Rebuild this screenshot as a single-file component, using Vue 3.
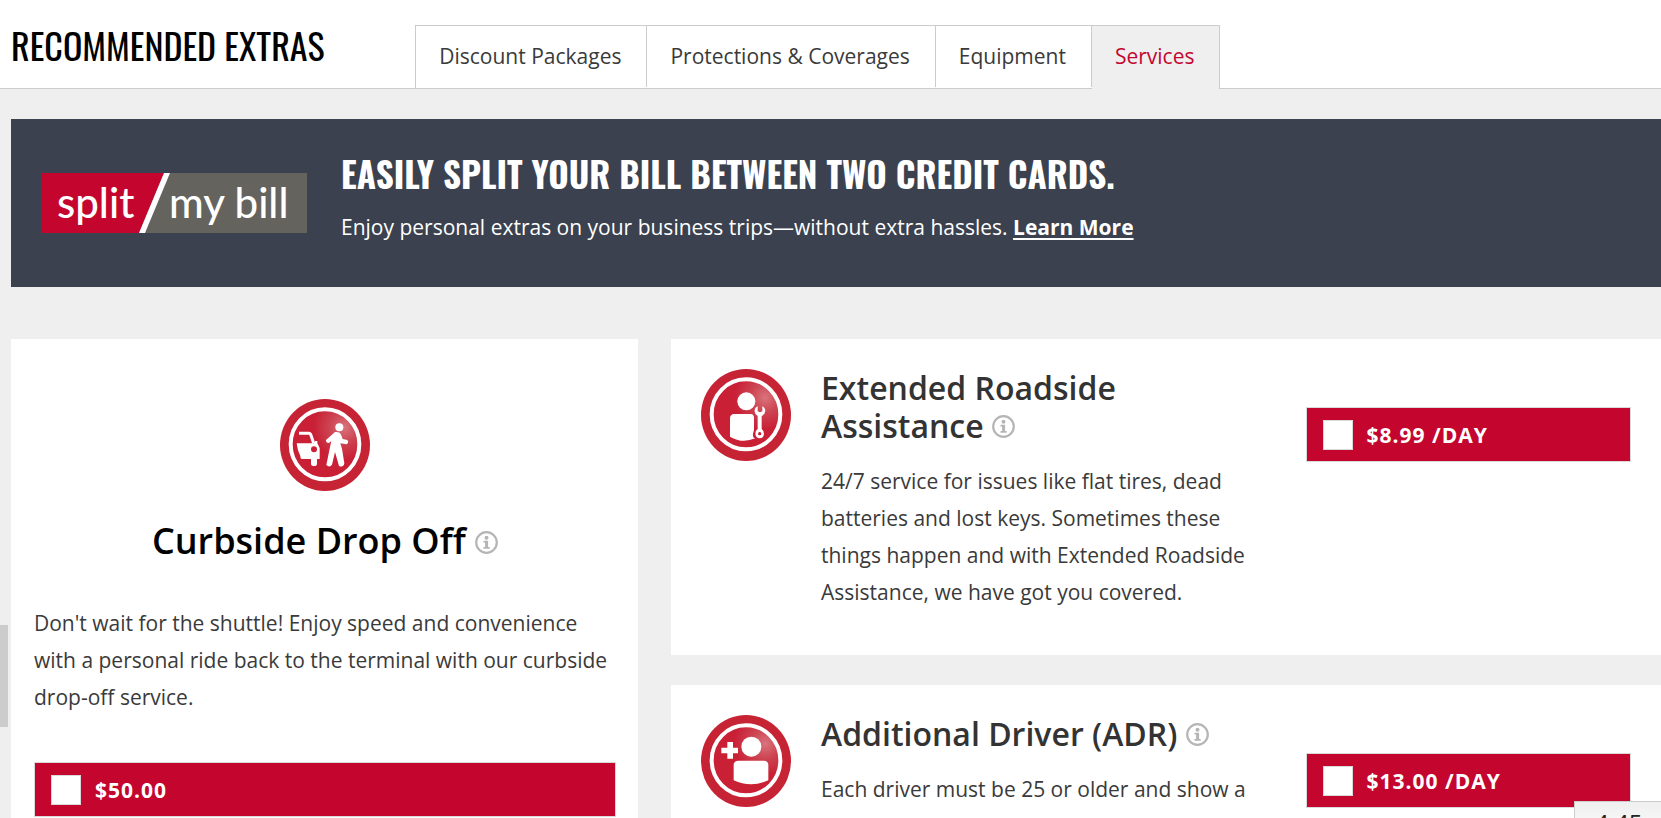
<script setup>
import { ref } from 'vue'

const tabs = ['Discount Packages', 'Protections & Coverages', 'Equipment', 'Services']
const active = ref('Services')
const curbside = ref(false)
const extras = ref([
  {
    id: 'roadside',
    title: 'Extended Roadside Assistance',
    text: '24/7 service for issues like flat tires, dead batteries and lost keys. Sometimes these things happen and with Extended Roadside Assistance, we have got you covered.',
    price: '$8.99 /DAY',
    checked: false,
  },
  {
    id: 'driver',
    title: 'Additional Driver (ADR)',
    text: "Each driver must be 25 or older and show a valid driver's license.",
    price: '$13.00 /DAY',
    checked: false,
  },
])
</script>

<template>
  <div class="page">
    <svg class="defs" aria-hidden="true">
      <defs>
        <radialGradient id="shine" cx="0.78" cy="0.26" r="0.45">
          <stop offset="0" stop-color="#d9747d" />
          <stop offset="0.45" stop-color="#cd4653" />
          <stop offset="1" stop-color="#c92036" />
        </radialGradient>
        <symbol id="badge" viewBox="0 0 270 276">
          <ellipse cx="135" cy="138" rx="135" ry="138" fill="#c62334" />
          <ellipse cx="135" cy="136" rx="103" ry="105" fill="url(#shine)" stroke="#fff" stroke-width="12" />
        </symbol>
        <symbol id="info" viewBox="0 0 23 23">
          <circle cx="11.500" cy="11.500" r="10.300" fill="none" stroke="#b5b5b5" stroke-width="2.200" />
          <circle cx="11.500" cy="6.800" r="2" fill="#b5b5b5" />
          <path d="M8.500 9.800h4.600v6.200h1.600v1.800h-6.200v-1.800h1.600v-4.400h-1.600z" fill="#b5b5b5" />
        </symbol>
      </defs>
    </svg>

    <header class="header">
      <h1 class="heading">RECOMMENDED EXTRAS</h1>
      <nav class="tabs">
        <button
          v-for="tab in tabs"
          :key="tab"
          type="button"
          class="tab"
          :class="{ active: tab === active }"
          @click="active = tab"
        >{{ tab }}</button>
      </nav>
    </header>

    <main class="main">
      <section class="banner">
        <svg class="logo" viewBox="0 0 266 60" role="img" aria-label="split my bill">
          <rect width="266" height="60" fill="#65635d" />
          <path d="M0 0H123L98 60H0z" fill="#c4062f" />
          <path d="M123 0h6L104 60h-6z" fill="#fff" />
          <text x="16" y="45" class="logo-text">split</text>
          <text x="128" y="45" class="logo-text">my bill</text>
        </svg>
        <div>
          <h2 class="banner-title">EASILY SPLIT YOUR BILL BETWEEN TWO CREDIT CARDS.</h2>
          <p class="banner-text">
            Enjoy personal extras on your business trips—without extra hassles.
            <a href="#">Learn More</a>
          </p>
        </div>
      </section>

      <div class="columns">
        <article class="card feature">
          <svg class="badge" viewBox="0 0 270 276" aria-hidden="true">
            <use href="#badge" />
            <g fill="#fff">
              <path d="M57 103H86Q91 103 93 109L101 133" fill="none" stroke="#fff" stroke-width="9" />
              <path d="M50 133H101L106 126H112V133L119 147V180H111V194Q111 201 102 201T93 194V180H64Q61 178 61 171L54 154Z" />
              <circle cx="102" cy="151" r="9" fill="#c92036" />
              <circle cx="178" cy="85" r="12" />
              <path d="M165 99Q180 97 184 109L188 120 202 123Q208 130 200 136L181 133 186 149 193 193Q190 207 177 201L165 159 156 197Q149 207 139 198L148 154 154 126 147 132Q137 132 138 123Z" />
            </g>
          </svg>
          <h2 class="feature-title">
            Curbside Drop Off
            <button type="button" class="info" aria-label="About Curbside Drop Off"><svg><use href="#info" /></svg></button>
          </h2>
          <p class="text">Don't wait for the shuttle! Enjoy speed and convenience with a personal ride back to the terminal with our curbside drop-off service.</p>
          <label class="price"><input v-model="curbside" type="checkbox" /><span>$50.00</span></label>
        </article>

        <div class="list">
          <article v-for="extra in extras" :key="extra.id" class="card extra">
            <svg class="badge" viewBox="0 0 270 276" aria-hidden="true">
              <use href="#badge" />
              <g v-if="extra.id === 'roadside'" fill="#fff">
                <circle cx="136" cy="97" r="27" />
                <path d="M99 135H150Q158 136 159 145V183Q151 207 163 208Q124 225 87 203V147Q88 136 99 135Z" />
                <path d="M170 112Q160 116 161 128Q162 137 170 141V180Q163 184 163 194Q164 207 176 208Q189 207 189 194Q188 184 182 180V141Q192 136 193 126Q192 115 184 112V127L177 130L170 127Z" />
                <circle cx="176" cy="194" r="5" fill="#c92036" />
              </g>
              <g v-else fill="#fff">
                <circle cx="151" cy="95" r="30" />
                <path d="M79 81H96V98H111V115H96V131H79V115H61V98H79Z" />
                <path d="M112 137H189Q202 138 202 150V196Q150 220 98 196V150Q98 138 112 137Z" />
              </g>
            </svg>
            <div class="details">
              <h3 class="extra-title">
                {{ extra.title }}
                <button type="button" class="info" :aria-label="'About ' + extra.title"><svg><use href="#info" /></svg></button>
              </h3>
              <p class="text">{{ extra.text }}</p>
            </div>
            <label class="price"><input v-model="extra.checked" type="checkbox" /><span>{{ extra.price }}</span></label>
          </article>
        </div>
      </div>
    </main>

    <div class="side-handle"></div>
    <div class="clock">4:45</div>
  </div>
</template>

<style>
body {
  margin: 0;
  background: #efefef;
}
</style>

<style scoped>
* {
  box-sizing: border-box;
}
.page {
  position: relative;
  height: 100vh;
  overflow: hidden;
  background: #efefef;
  color: #3a3a3a;
  font-family: "Open Sans", "Noto Sans", sans-serif;
  font-size: 21px;
}
h1, h2, h3, p {
  margin: 0;
}
.defs {
  position: absolute;
  width: 0;
  height: 0;
}
.header {
  display: flex;
  align-items: flex-start;
  background: #fff;
  border-bottom: 1px solid #ccc;
}
.heading {
  flex: 0 0 25%;
  padding: 21px 0 0 11px;
  color: #000;
  font-family: Oswald, "Roboto Condensed", "Liberation Sans Narrow", sans-serif;
  font-size: 36px;
  font-weight: 400;
  line-height: 48px;
  white-space: nowrap;
}
.tabs {
  display: flex;
  margin: 25px 0 -1px;
  border: 1px solid #ccc;
  border-bottom: 0;
}
.tab {
  height: 61px;
  padding: 0 25px 2px 23px;
  border: 0;
  border-right: 1px solid #ccc;
  background: #fff;
  color: #3a3a3a;
  font-family: inherit;
  font-size: 21px;
}
.tab:last-child {
  border-right: 0;
}
.tab.active {
  height: 63px;
  padding-bottom: 4px;
  background: #efefef;
  color: #c4062f;
}
.main {
  padding: 30px 0 0 11px;
}
.banner {
  display: flex;
  gap: 34px;
  height: 168px;
  padding: 30px;
  background: #3b414e;
  color: #fff;
}
.logo {
  flex: none;
  width: 266px;
  height: 60px;
  margin-top: 24px;
}
.logo-text {
  fill: #fff;
  font-family: Lato, sans-serif;
  font-size: 42px;
  font-weight: 500;
}
.banner-title {
  font-family: Oswald, "Roboto Condensed", "Liberation Sans Narrow", sans-serif;
  font-size: 35px;
  font-weight: 700;
  line-height: 48px;
}
.banner-text {
  margin-top: 12px;
  font-size: 21px;
  line-height: 37px;
}
.banner-text a {
  color: #fff;
  font-weight: 700;
  text-underline-offset: 3px;
}
.columns {
  display: grid;
  grid-template-columns: 38% 1fr;
  gap: 33px;
  margin-top: 52px;
}
.card {
  background: #fff;
}
.badge {
  flex: none;
  width: 90px;
  height: 92px;
}
.feature {
  display: flex;
  flex-direction: column;
  align-items: center;
  padding: 60px 22px 30px 23px;
}
.feature-title {
  margin-top: 24px;
  color: #000;
  font-size: 36px;
  font-weight: 600;
  line-height: 52px;
}
.feature .text {
  margin: 38px 0 46px;
}
.feature .price {
  flex: none;
  width: 100%;
  margin: 0;
}
.info {
  width: 23px;
  height: 23px;
  padding: 0;
  border: 0;
  background: none;
}
.info svg {
  display: block;
  width: 23px;
  height: 23px;
}
.text {
  font-size: 21px;
  line-height: 37px;
}
.list {
  display: flex;
  flex-direction: column;
  gap: 30px;
}
.extra {
  display: flex;
  gap: 30px;
  padding: 30px 30px 44px;
}
.details {
  flex: 1;
}
.extra-title {
  margin-bottom: 18px;
  color: #333;
  font-size: 32px;
  font-weight: 600;
  line-height: 38px;
}
.price {
  display: flex;
  flex: 0 0 35%;
  align-items: center;
  align-self: flex-start;
  gap: 14px;
  height: 55px;
  margin-top: 38px;
  padding: 0 16px;
  border: 1px solid #d9d9d9;
  background: #c4062f;
  color: #fff;
  font-size: 21px;
  font-weight: 700;
  letter-spacing: 1px;
}
.price input {
  width: 30px;
  height: 30px;
  margin: 0;
  appearance: none;
  border: 1px solid #d9d9d9;
  background: #fff;
}
.side-handle {
  position: absolute;
  top: 625px;
  left: 0;
  width: 8px;
  height: 102px;
  background: #ccc;
}
.clock {
  position: absolute;
  top: 801px;
  right: 0;
  width: 87px;
  padding: 5px 0 5px 20px;
  border: 1px solid #ccc;
  border-right: 0;
  background: linear-gradient(#efefef, #fff);
  color: #222;
  font-size: 24px;
  line-height: 32px;
}
</style>
